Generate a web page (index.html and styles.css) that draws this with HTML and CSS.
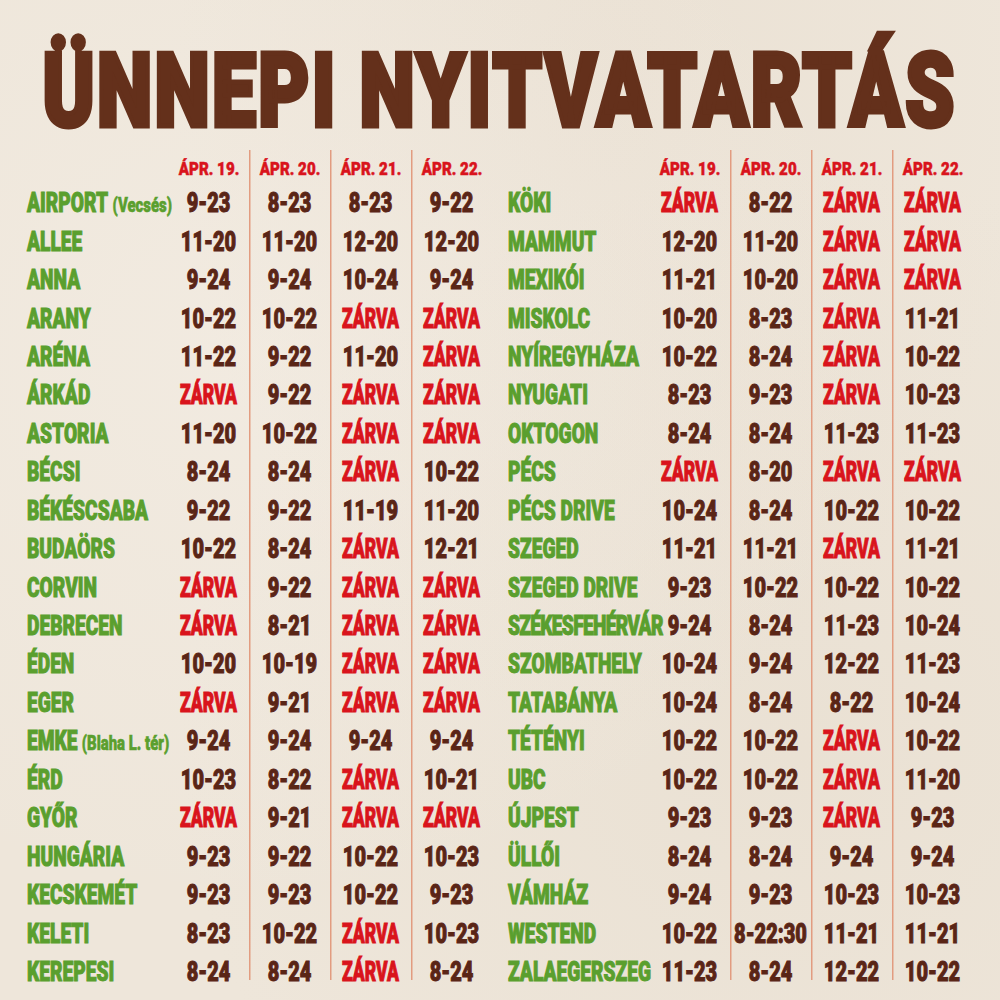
FILE: index.html
```html
<!DOCTYPE html>
<html lang="hu">
<head>
<meta charset="utf-8">
<title>Ünnepi nyitvatartás</title>
<link rel="stylesheet" href="styles.css">
</head>
<body>
<div class="page">
  <header class="title-wrap"><h1 class="title">ÜNNEPI NYITVATARTÁS</h1></header>
  <main class="sheet">
    <section class="tbl">
      <span class="hd-blank"></span>
      <span class="hd"><b>ÁPR. 19.</b></span><span class="hd"><b>ÁPR. 20.</b></span><span class="hd"><b>ÁPR. 21.</b></span><span class="hd"><b>ÁPR. 22.</b></span>

      <span class="nm">AIRPORT <small>(Vecsés)</small></span><span class="t">9-23</span><span class="t">8-23</span><span class="t">8-23</span><span class="t">9-22</span>
      <span class="nm">ALLEE</span><span class="t">11-20</span><span class="t">11-20</span><span class="t">12-20</span><span class="t">12-20</span>
      <span class="nm">ANNA</span><span class="t">9-24</span><span class="t">9-24</span><span class="t">10-24</span><span class="t">9-24</span>
      <span class="nm">ARANY</span><span class="t">10-22</span><span class="t">10-22</span><span class="z">ZÁRVA</span><span class="z">ZÁRVA</span>
      <span class="nm">ARÉNA</span><span class="t">11-22</span><span class="t">9-22</span><span class="t">11-20</span><span class="z">ZÁRVA</span>
      <span class="nm">ÁRKÁD</span><span class="z">ZÁRVA</span><span class="t">9-22</span><span class="z">ZÁRVA</span><span class="z">ZÁRVA</span>
      <span class="nm">ASTORIA</span><span class="t">11-20</span><span class="t">10-22</span><span class="z">ZÁRVA</span><span class="z">ZÁRVA</span>
      <span class="nm">BÉCSI</span><span class="t">8-24</span><span class="t">8-24</span><span class="z">ZÁRVA</span><span class="t">10-22</span>
      <span class="nm">BÉKÉSCSABA</span><span class="t">9-22</span><span class="t">9-22</span><span class="t">11-19</span><span class="t">11-20</span>
      <span class="nm">BUDAÖRS</span><span class="t">10-22</span><span class="t">8-24</span><span class="z">ZÁRVA</span><span class="t">12-21</span>
      <span class="nm">CORVIN</span><span class="z">ZÁRVA</span><span class="t">9-22</span><span class="z">ZÁRVA</span><span class="z">ZÁRVA</span>
      <span class="nm">DEBRECEN</span><span class="z">ZÁRVA</span><span class="t">8-21</span><span class="z">ZÁRVA</span><span class="z">ZÁRVA</span>
      <span class="nm">ÉDEN</span><span class="t">10-20</span><span class="t">10-19</span><span class="z">ZÁRVA</span><span class="z">ZÁRVA</span>
      <span class="nm">EGER</span><span class="z">ZÁRVA</span><span class="t">9-21</span><span class="z">ZÁRVA</span><span class="z">ZÁRVA</span>
      <span class="nm">EMKE <small>(Blaha L. tér)</small></span><span class="t">9-24</span><span class="t">9-24</span><span class="t">9-24</span><span class="t">9-24</span>
      <span class="nm">ÉRD</span><span class="t">10-23</span><span class="t">8-22</span><span class="z">ZÁRVA</span><span class="t">10-21</span>
      <span class="nm">GYŐR</span><span class="z">ZÁRVA</span><span class="t">9-21</span><span class="z">ZÁRVA</span><span class="z">ZÁRVA</span>
      <span class="nm">HUNGÁRIA</span><span class="t">9-23</span><span class="t">9-22</span><span class="t">10-22</span><span class="t">10-23</span>
      <span class="nm">KECSKEMÉT</span><span class="t">9-23</span><span class="t">9-23</span><span class="t">10-22</span><span class="t">9-23</span>
      <span class="nm">KELETI</span><span class="t">8-23</span><span class="t">10-22</span><span class="z">ZÁRVA</span><span class="t">10-23</span>
      <span class="nm">KEREPESI</span><span class="t">8-24</span><span class="t">8-24</span><span class="z">ZÁRVA</span><span class="t">8-24</span>
    </section>

    <section class="tbl">
      <span class="hd-blank"></span>
      <span class="hd"><b>ÁPR. 19.</b></span><span class="hd"><b>ÁPR. 20.</b></span><span class="hd"><b>ÁPR. 21.</b></span><span class="hd"><b>ÁPR. 22.</b></span>

      <span class="nm">KÖKI</span><span class="z">ZÁRVA</span><span class="t">8-22</span><span class="z">ZÁRVA</span><span class="z">ZÁRVA</span>
      <span class="nm">MAMMUT</span><span class="t">12-20</span><span class="t">11-20</span><span class="z">ZÁRVA</span><span class="z">ZÁRVA</span>
      <span class="nm">MEXIKÓI</span><span class="t">11-21</span><span class="t">10-20</span><span class="z">ZÁRVA</span><span class="z">ZÁRVA</span>
      <span class="nm">MISKOLC</span><span class="t">10-20</span><span class="t">8-23</span><span class="z">ZÁRVA</span><span class="t">11-21</span>
      <span class="nm">NYÍREGYHÁZA</span><span class="t">10-22</span><span class="t">8-24</span><span class="z">ZÁRVA</span><span class="t">10-22</span>
      <span class="nm">NYUGATI</span><span class="t">8-23</span><span class="t">9-23</span><span class="z">ZÁRVA</span><span class="t">10-23</span>
      <span class="nm">OKTOGON</span><span class="t">8-24</span><span class="t">8-24</span><span class="t">11-23</span><span class="t">11-23</span>
      <span class="nm">PÉCS</span><span class="z">ZÁRVA</span><span class="t">8-20</span><span class="z">ZÁRVA</span><span class="z">ZÁRVA</span>
      <span class="nm">PÉCS DRIVE</span><span class="t">10-24</span><span class="t">8-24</span><span class="t">10-22</span><span class="t">10-22</span>
      <span class="nm">SZEGED</span><span class="t">11-21</span><span class="t">11-21</span><span class="z">ZÁRVA</span><span class="t">11-21</span>
      <span class="nm">SZEGED DRIVE</span><span class="t">9-23</span><span class="t">10-22</span><span class="t">10-22</span><span class="t">10-22</span>
      <span class="nm nm-long">SZÉKESFEHÉRVÁR</span><span class="t">9-24</span><span class="t">8-24</span><span class="t">11-23</span><span class="t">10-24</span>
      <span class="nm">SZOMBATHELY</span><span class="t">10-24</span><span class="t">9-24</span><span class="t">12-22</span><span class="t">11-23</span>
      <span class="nm">TATABÁNYA</span><span class="t">10-24</span><span class="t">8-24</span><span class="t">8-22</span><span class="t">10-24</span>
      <span class="nm">TÉTÉNYI</span><span class="t">10-22</span><span class="t">10-22</span><span class="z">ZÁRVA</span><span class="t">10-22</span>
      <span class="nm">UBC</span><span class="t">10-22</span><span class="t">10-22</span><span class="z">ZÁRVA</span><span class="t">11-20</span>
      <span class="nm">ÚJPEST</span><span class="t">9-23</span><span class="t">9-23</span><span class="z">ZÁRVA</span><span class="t">9-23</span>
      <span class="nm">ÜLLŐI</span><span class="t">8-24</span><span class="t">8-24</span><span class="t">9-24</span><span class="t">9-24</span>
      <span class="nm">VÁMHÁZ</span><span class="t">9-24</span><span class="t">9-23</span><span class="t">10-23</span><span class="t">10-23</span>
      <span class="nm">WESTEND</span><span class="t">10-22</span><span class="t">8-22:30</span><span class="t">11-21</span><span class="t">11-21</span>
      <span class="nm">ZALAEGERSZEG</span><span class="t">11-23</span><span class="t">8-24</span><span class="t">12-22</span><span class="t">10-22</span>
    </section>
  </main>
</div>
</body>
</html>
```

FILE: styles.css
```css
html, body {
  margin: 0;
  padding: 0;
  overflow: hidden;
}
body {
  width: 1000px;
  height: 1000px;
  background-color: #eee6da;
  background-image:
    radial-gradient(ellipse at 25% 35%, rgba(246,240,232,0.45), transparent 60%),
    radial-gradient(ellipse at 80% 75%, rgba(222,210,192,0.25), transparent 55%),
    radial-gradient(ellipse at 60% 8%, rgba(226,214,198,0.3), transparent 50%);
  font-family: Roboto, "Liberation Sans", sans-serif;
  font-weight: 900;
}
.page {
  width: 1000px;
  height: 1000px;
}
.title-wrap {
  padding-top: 37px;
  height: 103px;
  display: flex;
  justify-content: center;
}
.title {
  margin: 0;
  font-size: 102px;
  line-height: 108px;
  font-weight: 900;
  color: #64301b;
  -webkit-text-stroke: 5px #64301b;
  white-space: nowrap;
  transform: scaleX(0.77);
  transform-origin: center;
  letter-spacing: 3px;
}
.sheet {
  margin-top: 10px;
  padding: 0 27px;
  display: grid;
  grid-template-columns: 465px 465px;
  column-gap: 16px;
}
.tbl {
  display: grid;
  grid-template-columns: 141px repeat(4, 81px);
  grid-template-rows: 34px;
  grid-auto-rows: 38.45px;
  background-image:
    linear-gradient(#e29c80, #e29c80),
    linear-gradient(#e29c80, #e29c80),
    linear-gradient(#e29c80, #e29c80);
  background-size: 1.5px 830px, 1.5px 830px, 1.5px 830px;
  background-position: 221.5px 0, 302.5px 0, 383.5px 0;
  background-repeat: no-repeat;
}
.hd, .t, .z {
  display: flex;
  justify-content: center;
  align-items: center;
  white-space: nowrap;
}
.hd {
  padding-top: 3px;
  color: #d9141c;
  font-size: 18px;
}
.hd b {
  font-weight: 900;
  display: inline-block;
  -webkit-text-stroke-width: 0.5px;
  transform: scaleX(0.84);
}
.t {
  color: #5a2516;
  font-size: 27px;
  -webkit-text-stroke-width: 1px;
  transform: scaleX(0.74);
}
.z {
  color: #d9141c;
  font-size: 27px;
  -webkit-text-stroke-width: 1px;
  transform: scaleX(0.65);
}
.nm {
  display: flex;
  align-items: center;
  white-space: nowrap;
  color: #5a9f2e;
  font-size: 27px;
  -webkit-text-stroke-width: 1px;
  transform: scaleX(0.71);
  transform-origin: left center;
}
.nm-long {
  letter-spacing: -1px;
}
.nm small {
  font-size: 21px;
  margin-left: 6px;
  padding-top: 3px;
  -webkit-text-stroke-width: 0.6px;
}
```
